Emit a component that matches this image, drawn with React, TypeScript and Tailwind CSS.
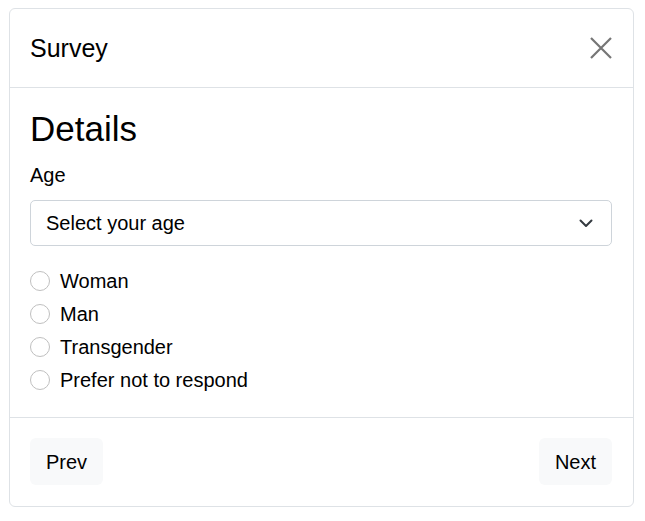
import React from "react";

const options = ["Woman", "Man", "Transgender", "Prefer not to respond"];

const App = () => {
  return (
    <div
      className="min-h-screen bg-white pt-2 pl-[9px] text-black"
      style={{ fontFamily: '"Liberation Sans", Arial, sans-serif' }}
    >
      <div className="w-[625px] rounded-md border border-[#dee2e6] bg-white">
        <div className="flex h-[79px] items-center justify-between border-b border-[#dee2e6] pr-[21px] pl-5">
          <h5 className="text-[25px] leading-[30px]">Survey</h5>
          <button className="text-[#757575]" aria-label="Close">
            <svg width="22" height="22" viewBox="0 0 22 22" fill="none">
              <path
                d="M1 1 21 21M21 1 1 21"
                stroke="currentColor"
                strokeWidth="2.2"
              />
            </svg>
          </button>
        </div>

        <div className="border-b border-[#dee2e6] pr-[21px] pl-5 pt-[21px] pb-[21px]">
          <h3 className="text-[35px] leading-[39px]">Details</h3>
          <label className="mt-3 block text-[20px] leading-[30px]">Age</label>
          <div className="mt-[10px] flex h-[46px] items-center justify-between rounded-[5px] border border-[#ced4da] pr-[18px] pl-[15px] text-[20px]">
            <span>Select your age</span>
            <svg width="14" height="10" viewBox="0 0 14 10" fill="none">
              <path
                d="M1.5 2.5 7 8l5.5-5.5"
                stroke="#343a40"
                strokeWidth="2"
                strokeLinecap="round"
                strokeLinejoin="round"
              />
            </svg>
          </div>
          <div className="mt-[18px] flex flex-col">
            {options.map((opt) => (
              <label key={opt} className="flex h-[33px] items-center gap-[10px] text-[20px]">
                <span className="h-5 w-5 rounded-full border border-[#bfbfbf] bg-white" />
                <span>{opt}</span>
              </label>
            ))}
          </div>
        </div>

        <div className="flex items-center justify-between pr-[21px] pl-5 pt-5 pb-[21px]">
          <button className="h-[47px] rounded-md bg-[#f8f9fa] px-4 text-[20px]">Prev</button>
          <button className="h-[47px] rounded-md bg-[#f8f9fa] px-4 text-[20px]">Next</button>
        </div>
      </div>
    </div>
  );
};

export default App;
